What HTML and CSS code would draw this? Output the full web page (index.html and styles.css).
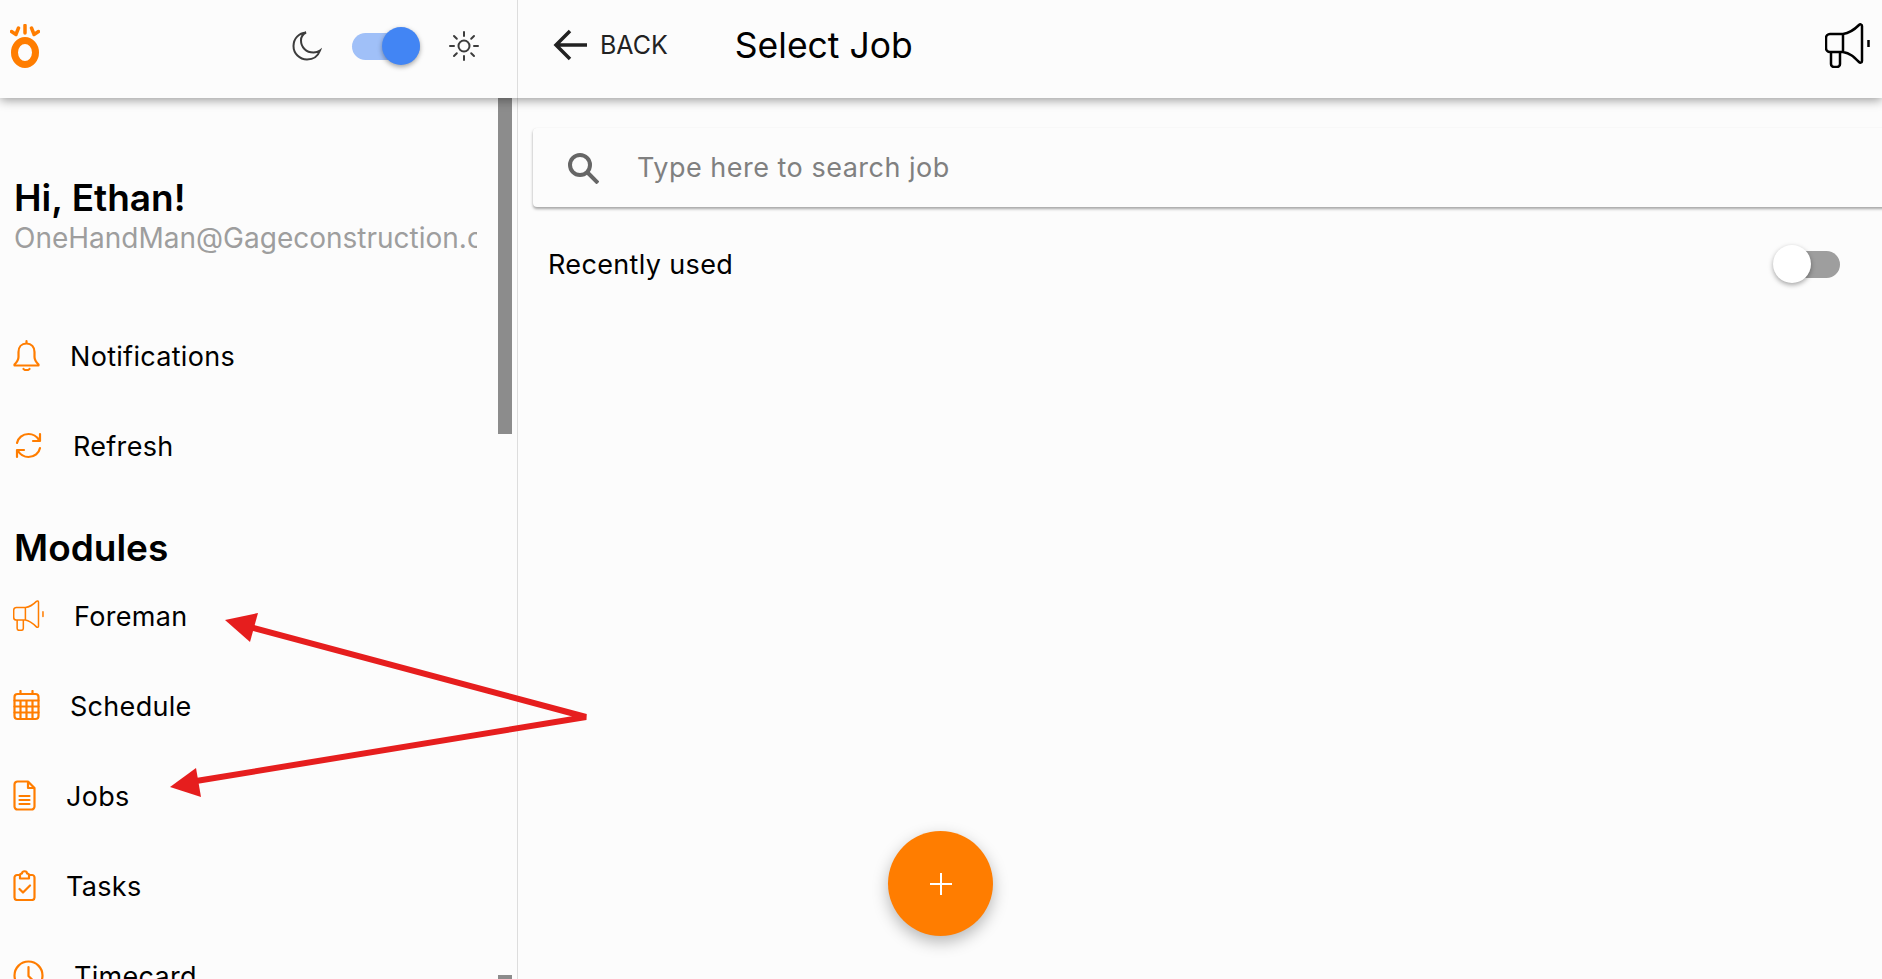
FILE: index.html
```html
<!doctype html>
<html lang="en">
<head>
    <meta charset="UTF-8">
    <title>Select Job</title>
    <link rel="stylesheet" href="styles.css">
</head>
<body>
    <svg class="defs" width="0" height="0">
        <symbol id="megaphone" viewBox="0 0 45 45">
            <path d="M18 11H5a4 4 0 0 0-4 4v10a4 4 0 0 0 4 4h13M18 11c7-1 12-5 16-9 1-1 3-1 3 1v35c0 2-2 2-3 1-5-5-9-9-16-10zM18 11v18M6 29v12a3 3 0 0 0 3 3h3a3 3 0 0 0 3-3V29M43.5 17v7"/>
        </symbol>
    </svg>

    <header class="topbar">
        <div class="topbar-left">
            <svg class="logo" width="30" height="44" viewBox="10 24 30 44">
                <ellipse cx="25" cy="52.5" rx="10.5" ry="12" fill="none" stroke="#ff7d00" stroke-width="7"/>
                <path d="M25 25.500v7.500M18.500 28l-2 5M31.500 28l2 5M11.500 31.500l4.500 3M38.500 31.500l-4.500 3" stroke="#ff7d00" stroke-width="3.500" stroke-linecap="round"/>
            </svg>
            <div class="theme-switch">
                <svg class="dark-icon" width="30" height="30" viewBox="0 0 30 30">
                    <path d="M14 1.500C7 2 1.500 7.500 1.500 15c0 7.500 6 13.500 13.500 13.500 6 0 11-3.500 13-9-2 1.500-4 2-6.500 2C14 21.500 9 16 9 9.500 9 6 11 3 14 1.500z"/>
                </svg>
                <div class="toggle toggle-on"><span class="knob"></span></div>
                <svg class="dark-icon" width="30" height="30" viewBox="0 0 30 30">
                    <circle cx="15" cy="15" r="5.500"/>
                    <path d="M15 1v4M15 25v4M1 15h4M25 15h4M5 5l2.800 2.800M22.200 22.200L25 25M5 25l2.800-2.800M22.200 7.800L25 5"/>
                </svg>
            </div>
        </div>
        <div class="topbar-right">
            <svg class="back-arrow" width="34" height="32" viewBox="0 0 34 32">
                <path d="M34 16H3M17 2L3 16l14 14"/>
            </svg>
            <span class="back-label">BACK</span>
            <h1 class="page-title">Select Job</h1>
            <svg class="top-megaphone" width="45" height="45"><use href="#megaphone"/></svg>
        </div>
    </header>

    <div class="layout">
        <aside class="sidebar">
            <div class="sidebar-body">
                <div class="greeting">
                    <div class="greeting-name">Hi, Ethan!</div>
                    <div class="greeting-mail">OneHandMan@Gageconstruction.com</div>
                </div>

                <div class="nav-row">
                    <svg class="nav-icon" width="27" height="31" viewBox="0 0 27 31">
                        <path d="M13.500 3.500c-5 0-8 3.500-8 8.500v5c0 3-1.500 5-4 7.500v1h24v-1c-2.500-2.500-4-4.500-4-7.500v-5c0-5-3-8.500-8-8.500zM13.500 3.500V1.200M10.500 29c1 1.500 5 1.500 6 0"/>
                    </svg>
                    <span>Notifications</span>
                </div>
                <div class="nav-row nav-row-refresh">
                    <svg class="nav-icon" width="29" height="29" viewBox="0 0 29 29">
                        <path d="M3 12C4 7 8.500 3 14.500 3c4.500 0 8 2 10.500 6M26 3v7h-7M26 17c-1 5-5.500 9-11.500 9-4.500 0-8-2-10.500-6M3 26v-7h7"/>
                    </svg>
                    <span>Refresh</span>
                </div>

                <h2 class="modules-title">Modules</h2>

                <div class="nav-row">
                    <svg class="nav-icon" width="31" height="31"><use href="#megaphone"/></svg>
                    <span>Foreman</span>
                </div>
                <div class="nav-row">
                    <svg class="nav-icon" width="27" height="31" viewBox="0 0 27 31">
                        <rect x="1.500" y="4" width="24" height="25" rx="3"/>
                        <path d="M7.500 1v3M19.500 1v3M1.500 10.500h24M1.500 16.500h24M1.500 22.500h24M7.500 10.500V29M13.500 10.500V29M19.500 10.500V29"/>
                    </svg>
                    <span>Schedule</span>
                </div>
                <div class="nav-row">
                    <svg class="nav-icon" width="23" height="31" viewBox="0 0 23 31">
                        <path d="M15 1.500H4.500a3 3 0 0 0-3 3v22a3 3 0 0 0 3 3h14a3 3 0 0 0 3-3V8zM15 1.500V8h6.500M6.500 16h10M6.500 20h10M6.500 24h10"/>
                    </svg>
                    <span>Jobs</span>
                </div>
                <div class="nav-row">
                    <svg class="nav-icon" width="23" height="31" viewBox="0 0 23 31">
                        <path d="M7 5H4a2.500 2.500 0 0 0-2.500 2.500v20A2.500 2.500 0 0 0 4 30h15a2.500 2.500 0 0 0 2.500-2.500v-20A2.500 2.500 0 0 0 19 5h-3M7 8.500V5c0-1 1-1.500 2-1.500 0-3 5-3 5 0 1 0 2 .5 2 1.500v3.500zM6.500 19l3.500 3.500 7-7"/>
                    </svg>
                    <span>Tasks</span>
                </div>
                <div class="nav-row">
                    <svg class="nav-icon" width="31" height="31" viewBox="0 0 31 31">
                        <circle cx="15.500" cy="15.500" r="14"/>
                        <path d="M15.500 7v9l6 6"/>
                    </svg>
                    <span>Timecard</span>
                </div>
            </div>
            <div class="scrollbar">
                <div class="scroll-thumb"></div>
                <div class="scroll-end"></div>
            </div>
        </aside>

        <main class="content">
            <div class="search-card">
                <svg class="search-icon" width="32" height="32" viewBox="0 0 32 32">
                    <circle cx="13" cy="13" r="10"/>
                    <path d="M20.500 20.500L31 31"/>
                </svg>
                <span class="search-placeholder">Type here to search job</span>
            </div>
            <div class="recent-row">
                <span>Recently used</span>
                <div class="toggle toggle-off"><span class="knob"></span></div>
            </div>
        </main>
    </div>

    <button class="fab">
        <svg width="22" height="22" viewBox="0 0 22 22"><path d="M11 0v22M0 11h22"/></svg>
    </button>

    <svg class="annotation" width="1882" height="979" viewBox="0 0 1882 979">
        <path class="arrow-line" d="M250 627L586 717L190 782"/>
        <path class="arrow-head" d="M225 620L258 613L250 642z"/>
        <path class="arrow-head" d="M170 787L196 768L201 797z"/>
    </svg>
</body>
</html>
```

FILE: styles.css
```css
* {
    box-sizing: border-box;
}
html, body {
    height: 100%;
}
body {
    margin: 0;
    font-family: 'Inter', 'Open Sans', sans-serif;
    font-size: 27px;
    color: #000;
    background-color: #fcfcfc;
    overflow: hidden;
}
.defs {
    position: absolute;
}
.topbar {
    display: flex;
    height: 98px;
    background-color: #fcfcfc;
    box-shadow: 0 2px 10px rgba(0,0,0,0.4);
    position: relative;
    z-index: 2;
}
.topbar-left {
    width: 518px;
    flex-shrink: 0;
    display: flex;
    align-items: center;
    justify-content: space-between;
    padding: 0 38px 6px 10px;
    border-right: 1px solid #ddd;
}
.theme-switch {
    display: flex;
    align-items: center;
    gap: 29px;
}
.dark-icon {
    fill: none;
    stroke: #3c3c3c;
    stroke-width: 2;
    stroke-linecap: round;
}
.toggle {
    position: relative;
    height: 27px;
    border-radius: 14px;
}
.toggle-on {
    width: 68px;
    margin-left: 1px;
    background-color: #a0c0f8;
}
.toggle-off {
    width: 65px;
    background-color: #9e9e9e;
}
.knob {
    position: absolute;
    top: -6px;
    width: 38px;
    height: 38px;
    border-radius: 50%;
    box-shadow: 0 2px 5px rgba(0,0,0,0.35);
}
.toggle-on .knob {
    right: 0;
    background-color: #4285f4;
}
.toggle-off .knob {
    left: -2px;
    background-color: #fff;
}
.topbar-right {
    flex: 1;
    display: flex;
    align-items: center;
    padding: 0 12px 8px 35px;
}
.back-arrow {
    fill: none;
    stroke: #222;
    stroke-width: 3.5;
}
.back-label {
    margin-left: 13px;
    font-size: 25px;
    color: #222;
}
.page-title {
    margin: 0 0 0 67px;
    font-size: 35.5px;
    font-weight: 400;
    flex: 1;
}
.top-megaphone {
    fill: none;
    stroke: #000;
    stroke-width: 2.500;
    stroke-linejoin: round;
}
.layout {
    display: flex;
    height: 881px;
}
.sidebar {
    width: 518px;
    flex-shrink: 0;
    display: flex;
    border-right: 1px solid #ddd;
    padding-right: 5px;
}
.sidebar-body {
    flex: 1;
    min-width: 0;
    overflow: hidden;
}
.greeting {
    height: 212px;
    padding: 78px 21px 0 14px;
}
.greeting-name {
    font-size: 37px;
    font-weight: 600;
    line-height: 44px;
}
.greeting-mail {
    font-size: 28px;
    line-height: 36px;
    color: #9e9e9e;
    white-space: nowrap;
    overflow: hidden;
}
.nav-row {
    display: flex;
    align-items: center;
    gap: 30px;
    height: 90px;
    padding-left: 13px;
    letter-spacing: 0.3px;
}
.nav-row span {
    padding-top: 2px;
}
.nav-row-refresh {
    padding-left: 14px;
}
.nav-icon {
    flex-shrink: 0;
    fill: none;
    stroke: #ff7d00;
    stroke-width: 2.200;
    stroke-linejoin: round;
    stroke-linecap: round;
}
.modules-title {
    margin: 0;
    height: 80px;
    padding: 35px 0 0 14px;
    font-size: 37px;
    line-height: 46px;
    font-weight: 600;
}
.scrollbar {
    width: 14px;
    flex-shrink: 0;
    display: flex;
    flex-direction: column;
    justify-content: space-between;
}
.scroll-thumb {
    height: 336px;
    background-color: #8c8c8c;
}
.scroll-end {
    height: 4px;
    background-color: #8c8c8c;
}
.content {
    flex: 1;
    min-width: 0;
    padding-top: 30px;
}
.search-card {
    display: flex;
    align-items: center;
    height: 79px;
    margin: 0 -20px 0 15px;
    padding-left: 34px;
    background-color: #fcfcfc;
    border-radius: 4px;
    box-shadow: 0 2px 3px rgba(0,0,0,0.35), 0 0 1px rgba(0,0,0,0.06);
}
.search-icon {
    fill: none;
    stroke: #666;
    stroke-width: 4;
}
.search-placeholder {
    margin-left: 38px;
    color: #808080;
    letter-spacing: 0.5px;
}
.recent-row {
    display: flex;
    align-items: center;
    justify-content: space-between;
    padding: 41px 42px 0 30px;
    letter-spacing: 0.35px;
}
.fab {
    position: absolute;
    left: 888px;
    top: 831px;
    width: 105px;
    height: 105px;
    display: flex;
    align-items: center;
    justify-content: center;
    padding: 0;
    border: none;
    border-radius: 50%;
    background-color: #ff7d00;
    box-shadow: 0 6px 16px rgba(0,0,0,0.28);
}
.fab svg {
    stroke: #fff;
    stroke-width: 2;
}
.annotation {
    position: absolute;
    left: 0;
    top: 0;
    z-index: 3;
}
.arrow-line {
    fill: none;
    stroke: #e61e1e;
    stroke-width: 6;
}
.arrow-head {
    fill: #e61e1e;
}
```
